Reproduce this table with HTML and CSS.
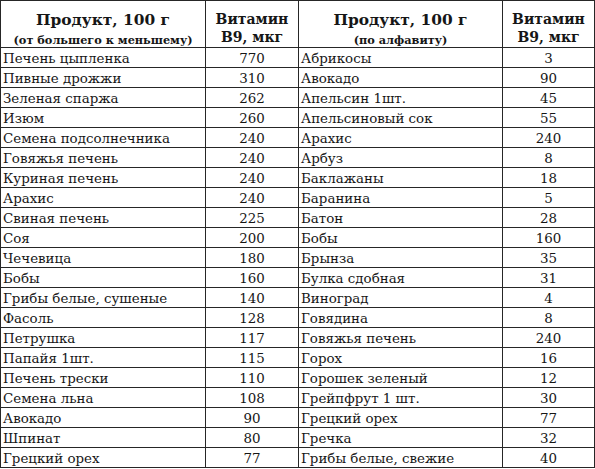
FILE: index.html
```html
<!DOCTYPE html>
<html lang="ru">
<head>
<meta charset="utf-8">
<title>Витамин B9</title>
<link rel="stylesheet" href="styles.css">
</head>
<body>
<table class="vit">
  <colgroup>
    <col class="c-name"><col class="c-val"><col class="c-name2"><col class="c-val2">
  </colgroup>
  <thead>
    <tr class="head">
      <th class="th-prod"><span class="h-main">Продукт, 100 г</span><span class="h-sub">(от большего к меньшему)</span></th>
      <th class="th-vit"><span class="h-vit">Витамин</span><span class="h-vit2">В9, мкг</span></th>
      <th class="th-prod"><span class="h-main">Продукт, 100 г</span><span class="h-sub">(по алфавиту)</span></th>
      <th class="th-vit"><span class="h-vit">Витамин</span><span class="h-vit2">В9, мкг</span></th>
    </tr>
  </thead>
  <tbody>
    <tr><td>Печень цыпленка</td><td class="num">770</td><td>Абрикосы</td><td class="num">3</td></tr>
    <tr><td>Пивные дрожжи</td><td class="num">310</td><td>Авокадо</td><td class="num">90</td></tr>
    <tr><td>Зеленая спаржа</td><td class="num">262</td><td>Апельсин 1шт.</td><td class="num">45</td></tr>
    <tr><td>Изюм</td><td class="num">260</td><td>Апельсиновый сок</td><td class="num">55</td></tr>
    <tr><td>Семена подсолнечника</td><td class="num">240</td><td>Арахис</td><td class="num">240</td></tr>
    <tr><td>Говяжья печень</td><td class="num">240</td><td>Арбуз</td><td class="num">8</td></tr>
    <tr><td>Куриная печень</td><td class="num">240</td><td>Баклажаны</td><td class="num">18</td></tr>
    <tr><td>Арахис</td><td class="num">240</td><td>Баранина</td><td class="num">5</td></tr>
    <tr><td>Свиная печень</td><td class="num">225</td><td>Батон</td><td class="num">28</td></tr>
    <tr><td>Соя</td><td class="num">200</td><td>Бобы</td><td class="num">160</td></tr>
    <tr><td>Чечевица</td><td class="num">180</td><td>Брынза</td><td class="num">35</td></tr>
    <tr><td>Бобы</td><td class="num">160</td><td>Булка сдобная</td><td class="num">31</td></tr>
    <tr><td>Грибы белые, сушеные</td><td class="num">140</td><td>Виноград</td><td class="num">4</td></tr>
    <tr><td>Фасоль</td><td class="num">128</td><td>Говядина</td><td class="num">8</td></tr>
    <tr><td>Петрушка</td><td class="num">117</td><td>Говяжья печень</td><td class="num">240</td></tr>
    <tr><td>Папайя 1шт.</td><td class="num">115</td><td>Горох</td><td class="num">16</td></tr>
    <tr><td>Печень трески</td><td class="num">110</td><td>Горошек зеленый</td><td class="num">12</td></tr>
    <tr><td>Семена льна</td><td class="num">108</td><td>Грейпфрут 1 шт.</td><td class="num">30</td></tr>
    <tr><td>Авокадо</td><td class="num">90</td><td>Грецкий орех</td><td class="num">77</td></tr>
    <tr><td>Шпинат</td><td class="num">80</td><td>Гречка</td><td class="num">32</td></tr>
    <tr><td>Грецкий орех</td><td class="num">77</td><td>Грибы белые, свежие</td><td class="num">40</td></tr>
  </tbody>
</table>
</body>
</html>
```

FILE: styles.css
```css
html, body {
  margin: 0;
  padding: 0;
  background: #ffffff;
}

.vit {
  border-collapse: collapse;
  table-layout: fixed;
  width: 594px;
  font-family: "DejaVu Serif", "Liberation Serif", serif;
  color: #161616;
}

.c-name { width: 205px; }
.c-val { width: 93px; }
.c-name2 { width: 204px; }
.c-val2 { width: 92px; }

.vit th,
.vit td {
  border: 1px solid #262626;
  padding: 0;
}

.vit .head th {
  height: 47px;
  text-align: center;
  font-weight: bold;
  box-sizing: border-box;
  vertical-align: top;
}

.vit .head .th-prod {
  padding-top: 5px;
}

.vit .head .th-vit {
  padding-top: 7px;
}

.h-main {
  display: block;
  font-size: 15.4px;
  line-height: 29px;
  height: 29px;
}

.h-sub {
  display: block;
  font-size: 11.3px;
  line-height: 10px;
  height: 10px;
}

.h-vit {
  display: block;
  font-size: 14px;
  line-height: 22px;
  height: 22px;
}

.h-vit2 {
  display: block;
  font-size: 14px;
  line-height: 15px;
  height: 15px;
}

.vit td {
  height: 16px;
  font-size: 13.4px;
  line-height: 16px;
  padding-top: 3px;
  padding-left: 2px;
  white-space: nowrap;
  overflow: hidden;
}

.vit td.num {
  text-align: center;
  padding-left: 0;
}
```
